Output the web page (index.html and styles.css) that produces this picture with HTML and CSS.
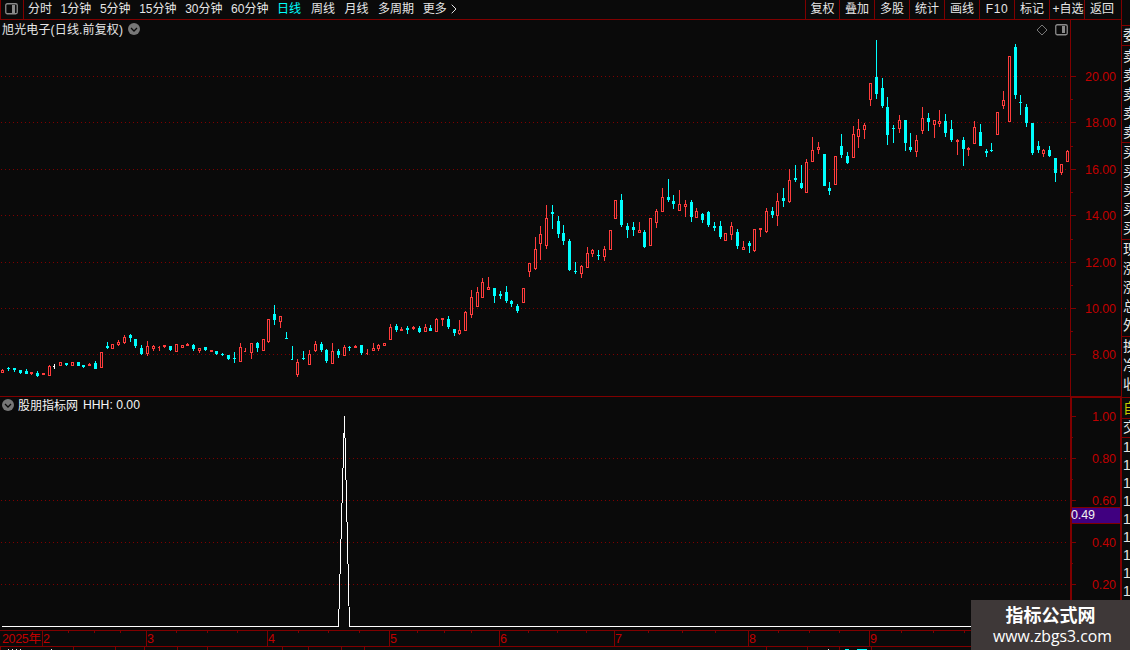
FILE: index.html
```html
<!DOCTYPE html>
<html lang="zh-CN">
<head>
    <meta charset="UTF-8">
    <title>旭光电子 日线</title>
    <link rel="stylesheet" href="styles.css">
</head>
<body>
    <div class="screen">
        <!-- Chart side: toolbar, price, indicator, dates -->
        <div class="main">
            <div class="toolbar">
                <div class="layout-btn">
                    <svg width="13" height="12" viewBox="0 0 13 12"><rect x="0.75" y="0.75" width="11.5" height="10" rx="1.5" fill="none" stroke="#8a8a8a" stroke-width="1.3"/><rect x="7" y="2" width="3" height="8" fill="#8a8a8a"/></svg>
                </div>
                <div class="periods">
                    <span class="num">分时</span>
                    <span class="num">1分钟</span>
                    <span class="num">5分钟</span>
                    <span class="num">15分钟</span>
                    <span class="num">30分钟</span>
                    <span class="num">60分钟</span>
                    <span class="active">日线</span>
                    <span>周线</span>
                    <span>月线</span>
                    <span class="num">多周期</span>
                    <span class="more">更多<svg width="6" height="10" viewBox="0 0 6 10"><path d="M0.7 0.7L5 5L0.7 9.3" fill="none" stroke="#e0e0e0"/></svg></span>
                </div>
                <div class="tools">
                    <span class="first">复权</span><span>叠加</span><span>多股</span><span>统计</span><span>画线</span><span class="latin">F10</span><span>标记</span><span class="add">+自选</span><span class="last">返回</span>
                </div>
            </div>

            <div class="panel price">
                <svg id="price" width="1121" height="376" viewBox="0 20 1121 376" shape-rendering="crispEdges"></svg>
                <div class="caption">
                    <span class="stock">旭光电子(日线.前复权)</span>
                    <svg width="12" height="12" viewBox="0 0 12 12"><circle cx="6" cy="6" r="6" fill="#777"/><path d="M3 5L6 8L9 5" fill="none" stroke="#0a0a0a" stroke-width="1.3"/></svg>
                </div>
                <div class="corner">
                    <svg width="12" height="12" viewBox="0 0 12 12"><path d="M6 1L11 6L6 11L1 6Z" fill="none" stroke="#777"/></svg>
                    <svg width="13" height="12" viewBox="0 0 13 12"><rect x="0.75" y="0.75" width="11.5" height="10" rx="1.5" fill="none" stroke="#8a8a8a" stroke-width="1.3"/><rect x="7" y="2" width="3" height="7" fill="#8a8a8a"/></svg>
                </div>
            </div>

            <div class="panel indicator">
                <svg id="indicator" width="1121" height="234" viewBox="0 396 1121 234" shape-rendering="crispEdges"></svg>
                <div class="caption">
                    <svg width="12" height="12" viewBox="0 0 12 12"><circle cx="6" cy="6" r="6" fill="#777"/><path d="M3 5L6 8L9 5" fill="none" stroke="#0a0a0a" stroke-width="1.3"/></svg>
                    <span class="formula">股朋指标网</span>
                    <span class="value">HHH: 0.00</span>
                </div>
            </div>

            <svg id="dates" width="1121" height="20" viewBox="0 630 1121 20" shape-rendering="crispEdges"></svg>
        </div>

        <!-- Quote column, cut off by the window edge -->
        <div class="quotes">
            <div class="q head"></div>
            <div class="q one">委</div>
            <div class="q asks"><i>卖</i><i>卖</i><i>卖</i><i>卖</i><i>卖</i></div>
            <div class="q bids"><i>买</i><i>买</i><i>买</i><i>买</i><i>买</i></div>
            <div class="q stats"><i>现</i><i>涨</i><i>涨</i><i>总</i><i>外</i></div>
            <div class="q turn"><i>换</i><i>净</i><i>收</i></div>
            <div class="q self">自</div>
            <div class="q deal">交</div>
            <div class="ticks"><i>1</i><i>1</i><i>1</i><i>1</i><i>1</i><i>1</i><i>1</i><i>1</i><i>1</i></div>
        </div>
    </div>

    <div class="watermark">
        <b>指标公式网</b>
        <span>www.zbgs3.com</span>
    </div>

    <script src="chart.js"></script>
</body>
</html>
```
FILE: styles.css
```css
body {
    margin: 0;
    width: 1130px;
    height: 650px;
    overflow: hidden;
    background: #0a0a0a;
    color: #e6e6e6;
    font-family: "Liberation Sans", "Noto Sans CJK SC", sans-serif;
    font-size: 12px;
}

svg {
    display: block;
    flex: none;
}

.screen {
    display: flex;
    height: 650px;
}

.main {
    width: 1121px;
    flex: none;
}

/* Toolbar */
.toolbar {
    display: flex;
    height: 20px;
    box-sizing: border-box;
    border-bottom: 1px solid #800000;
    border-left: 1px solid #800000;
    line-height: 19px;
    white-space: nowrap;
}

.layout-btn {
    width: 23px;
    padding: 3px 0 0 4px;
    box-sizing: border-box;
    border-right: 1px solid #800000;
}

.periods {
    display: flex;
    padding-left: 4px;
}

.periods span {
    margin-right: 9.5px;
}

.periods .num {
    margin-right: 8.6px;
}

.periods .active {
    color: #00ffff;
    margin-right: 10px;
}

.periods .more {
    display: flex;
    align-items: center;
    gap: 4px;
}

.more svg {
    margin-top: -2px;
}

.tools {
    display: flex;
    margin-left: auto;
}

.tools span {
    width: 35px;
    box-sizing: border-box;
    border-left: 1px solid #800000;
    text-align: center;
}

.tools .first {
    width: 34px;
}

.tools .add {
    padding-left: 2px;
}

.tools .last {
    width: 37px;
    padding-right: 7px;
    text-align: right;
}

.tools .latin {
    letter-spacing: 0.6px;
}

/* Chart panels */
.panel {
    position: relative;
}

.caption {
    position: absolute;
    top: 0;
    left: 2px;
    height: 18px;
    display: flex;
    align-items: center;
    white-space: nowrap;
}

.stock {
    margin: -2px 5px 0 0;
    letter-spacing: 0.15px;
}

.formula {
    margin: -2px 5px 0 4px;
}

.value {
    font-size: 12.2px;
}

.indicator .caption {
    color: #f4f4f4;
}

.corner {
    position: absolute;
    top: 4px;
    left: 1036px;
    display: flex;
    gap: 7px;
}

.axis {
    fill: #c00000;
    font-size: 12.5px;
}

/* Quote column */
.quotes {
    width: 9px;
    overflow: hidden;
    box-sizing: border-box;
    border-left: 1px solid #800000;
    font-size: 14px;
}

.quotes i {
    display: block;
    font-style: normal;
    line-height: 19px;
}

.q {
    box-sizing: border-box;
    padding-left: 1px;
    border-bottom: 1px solid #800000;
    overflow: hidden;
}

.head {
    height: 26px;
}

.one {
    height: 20px;
    line-height: 19px;
}

.asks {
    height: 97px;
    padding-top: 1px;
}

.bids {
    height: 97px;
}

.stats {
    height: 97px;
}

.turn {
    height: 61px;
}

.self {
    height: 21px;
    line-height: 20px;
    color: #c8c800;
}

.deal {
    height: 19px;
    line-height: 17px;
}

.ticks {
    padding-left: 1px;
}

.ticks i {
    line-height: 18px;
}

/* Site watermark over the bottom right corner */
.watermark {
    position: absolute;
    left: 971px;
    top: 600px;
    width: 159px;
    height: 50px;
    padding: 4px 0 0 4px;
    box-sizing: border-box;
    display: flex;
    flex-direction: column;
    align-items: center;
    background: #3e3838;
    color: #ffffff;
    font-family: "Open Sans", "Noto Sans CJK SC", sans-serif;
}

.watermark b {
    margin-right: 4px;
    font-size: 18px;
    line-height: 22px;
}

.watermark span {
    font-size: 15.8px;
    line-height: 20px;
}
```
FILE: chart.js
```js
const RED = "#ff3c3c";
const CYAN = "#00ffff";
const LINE = "#800000";

// x, high, body top, body bottom, low, type (r = up, c = down, w = flat)
const candles = `
2 369 370 373 373 r|8 367 368 369 371 c|14 368 368 370 372 c|20 370 370 373 374 c|26 369 371 374 374 c
31 372 372 374 375 r|37 371 373 376 377 c|43 373 373 375 375 r|49 365 366 376 376 r|54 364 366 367 369 w
60 362 362 366 366 r|66 363 363 365 366 c|72 362 362 366 366 r|78 362 362 366 366 c|83 365 365 367 368 c
89 363 364 366 366 r|95 361 363 369 369 c|101 352 352 368 368 r|107 342 346 348 349 c|112 344 344 349 349 r
118 340 342 345 346 r|124 335 337 343 344 r|130 334 335 338 342 c|135 339 339 346 348 c|141 345 348 354 355 c
147 341 346 354 356 r|153 345 346 349 351 r|159 346 347 348 351 r|164 345 345 347 348 r|170 346 346 350 351 c
176 344 344 352 352 r|182 345 345 348 348 r|187 343 344 346 346 r|193 344 345 349 351 c|199 348 348 351 353 r
205 347 347 350 351 c|211 350 350 352 352 r|216 351 351 354 355 c|222 353 354 355 356 c|228 355 355 359 360 c
234 352 358 359 363 c|240 343 347 362 362 r|245 348 351 352 352 r|251 343 343 353 359 r|257 342 343 348 352 c
263 339 339 351 351 r|268 319 319 342 343 r|274 305 314 320 325 c|280 316 316 322 328 r|286 332 338 339 339 c
292 346 359 360 360 c|297 359 362 375 377 r|303 351 358 359 360 c|309 350 354 365 365 r|315 341 344 351 352 r
321 342 344 350 352 c|326 349 350 361 363 c|332 343 351 364 364 r|338 349 351 355 358 c|344 345 347 356 356 r
349 346 347 348 351 c|355 345 346 348 348 r|361 345 345 353 355 c|367 349 353 354 355 r|373 343 348 351 351 r
378 344 345 349 351 r|384 343 343 346 346 r|390 324 327 340 340 r|396 324 326 330 332 c|401 327 329 331 331 r
407 326 328 330 334 c|413 326 327 329 330 r|419 326 328 332 333 c|425 324 327 332 332 r|430 325 328 331 331 c
436 318 319 332 332 r|442 318 318 320 326 r|448 316 319 327 329 c|454 329 329 333 336 c|459 320 330 334 335 r
465 311 312 331 331 r|471 290 297 315 318 r|477 287 292 307 307 r|482 278 282 298 298 r|488 277 287 290 290 r
494 288 288 296 303 c|500 291 294 296 299 c|506 286 292 301 303 c|511 300 301 304 307 c|517 304 306 311 313 c
523 288 288 303 303 r|529 263 263 272 277 r|535 237 249 269 270 r|540 226 234 244 260 r|546 205 218 246 249 r
552 205 212 214 229 c|558 216 221 234 238 c|563 225 233 241 245 c|569 239 241 270 271 c|575 262 271 272 274 c
581 265 266 274 278 r|587 247 253 268 268 r|592 249 250 254 257 r|598 250 255 256 260 c|604 246 249 257 261 r
610 230 230 250 250 r|615 200 200 219 219 r|621 194 200 225 227 c|627 223 226 230 238 c|633 222 227 230 236 c
639 222 230 233 233 r|644 230 232 247 248 c|650 218 218 246 246 r|656 209 211 223 228 r|662 188 197 212 212 r
668 179 197 200 202 c|673 195 201 204 209 c|679 190 204 211 211 r|685 200 204 207 217 r|691 200 202 217 222 c
696 208 211 218 218 r|702 213 214 220 223 c|708 211 212 225 227 c|714 222 226 228 231 c|720 221 226 237 239 c
725 233 233 241 241 r|731 222 226 235 240 r|737 229 232 246 249 c|743 241 247 250 250 r|749 241 243 246 253 c
754 229 229 251 252 r|760 228 228 230 237 r|766 208 211 232 233 r|772 207 211 215 218 c|777 193 201 216 226 r
783 188 198 201 207 c|789 169 180 202 203 r|795 165 178 180 182 c|801 165 183 188 189 c|806 159 162 193 193 r
812 137 150 162 162 r|818 142 147 150 154 r|824 154 154 186 186 c|829 182 188 191 195 c|835 156 156 185 185 r
841 134 146 155 158 c|847 152 156 163 164 c|853 126 134 158 158 r|858 119 129 137 148 r|864 123 125 130 139 r
870 83 83 100 106 r|876 40 77 94 99 c|882 78 88 106 108 c|887 97 107 135 145 c|893 125 128 129 143 c
899 115 120 129 133 r|905 120 120 143 151 c|910 133 147 150 152 c|916 135 140 152 157 r|922 107 118 131 134 r
928 113 118 122 131 c|934 120 120 125 138 r|939 110 121 124 127 r|945 114 121 133 137 c|951 120 129 140 142 c
957 139 140 142 155 r|963 137 140 149 166 c|968 147 148 150 156 r|974 121 127 144 144 r|980 124 132 146 146 c
986 149 151 153 157 c|991 143 150 151 152 c|997 112 112 135 135 r|1003 91 100 106 109 r|1009 56 56 122 122 r
1015 44 47 95 99 c|1020 95 102 103 115 c|1026 104 107 123 127 c|1032 123 123 153 155 c|1038 141 146 150 153 c
1043 149 150 154 157 r|1049 146 150 156 157 c|1055 158 158 173 182 c|1061 164 164 173 175 r|1067 150 151 162 162 r
`.trim().split(/[|\n]/).map(s => s.split(" "));

const box = (x, y, w, h, fill) => `<rect x="${x}" y="${y}" width="${w}" height="${h}" fill="${fill}"/>`;
const label = (x, y, t, anchor, width) =>
    `<text class="axis" x="${x}" y="${y}" text-anchor="${anchor}"${width ? ` textLength="${width}"` : ""}>${t}</text>`;
const grid = y => `<line x1="1" x2="1068" y1="${y + 0.5}" y2="${y + 0.5}" stroke="${LINE}" stroke-dasharray="1 3"/>`;

function drawCandle([x, high, top, bottom, low, type]) {
    x = +x; high = +high; top = +top; bottom = +bottom; low = +low;
    const color = type === "r" ? RED : type === "c" ? CYAN : "#ffffff";
    let out = "";
    if (bottom - top === 1 && (type !== "c" || x === 292)) {
        // open equals close: tick on the left only
        return box(x, high, 1, low - high, color) + box(x - 1, top, 1, 1, color);
    }
    if (high < top) out += box(x, high, 1, top - high, color);
    if (low > bottom) out += box(x, bottom, 1, low - bottom, color);
    out += box(x - 1, top, 3, bottom - top, color);
    if (type === "r" && bottom - top > 2) out += box(x, top + 1, 1, bottom - top - 2, "#0a0a0a");
    return out;
}

// Price panel
let price = "";
[[76, "20.00"], [122, "18.00"], [169, "16.00"], [215, "14.00"], [262, "12.00"], [308, "10.00"], [354, "8.00"]].forEach(([y, t]) => {
    price += grid(y) + box(1071, y, 5, 1, LINE) + label(1116, y + 5, t, "end", t.length > 4 ? 31 : 24);
});
[99, 146, 192, 239, 285, 331].forEach(y => price += box(1071, y, 2, 1, LINE));
price += box(1070, 20, 1, 376, LINE) + candles.map(drawCandle).join("");
document.getElementById("price").innerHTML = price;

// Indicator panel
let ind = box(0, 396, 1121, 1, LINE) + box(1070, 397, 51, 1, LINE) + box(1070, 396, 2, 234, LINE) + box(1120, 396, 1, 234, LINE);
[[416, "1.00"], [458, "0.80"], [500, "0.60"], [542, "0.40"], [584, "0.20"]].forEach(([y, t]) => {
    if (y > 416) ind += grid(y);
    ind += box(1072, y, 4, 1, LINE) + label(1116, y + 5, t, "end", 24);
});
[437, 479, 521, 563, 605].forEach(y => ind += box(1072, y, 1, 1, LINE));
ind += box(1072, 507, 48, 17, LINE) + box(1072, 508, 48, 15, "#400080");
ind += `<text x="1071" y="519" fill="#f0f0f0" font-size="12.5" textLength="24">0.49</text>`;
ind += `<polyline points="2,626.5 338.5,626.5 344.5,416 349.5,626.5 1070,626.5" fill="none" stroke="#ffffff"/>`;
document.getElementById("indicator").innerHTML = ind;

// Date axis
let dates = box(0, 630, 1121, 1, LINE) + box(0, 646, 1121, 1, LINE) + label(2, 643, "2025年", "start", 39);
[[42, 2], [146, 3], [267, 4], [389, 5], [499, 6], [614, 7], [748, 8], [869, 9]].forEach(([x, t]) => {
    dates += box(x, 631, 1, 15, LINE) + label(x + 1, 643, t, "start");
});
[68, 94, 120, 176, 207, 237, 298, 328, 359, 417, 444, 471, 528, 557, 586, 648, 682, 715, 778, 809, 839, 901, 933, 964].forEach(x => dates += box(x, 631, 1, 2, LINE));
[0, 73, 115, 144, 177, 207, 282, 308, 341, 364, 766, 807, 839, 871].forEach(x => dates += box(x, 647, 1, 3, LINE));
[8, 12, 16, 20, 51, 828].forEach(x => dates += box(x, 649, 1, 1, "#e6e6e6"));
dates += box(845, 649, 4, 1, CYAN) + box(857, 649, 10, 1, CYAN);
document.getElementById("dates").innerHTML = dates;
```
